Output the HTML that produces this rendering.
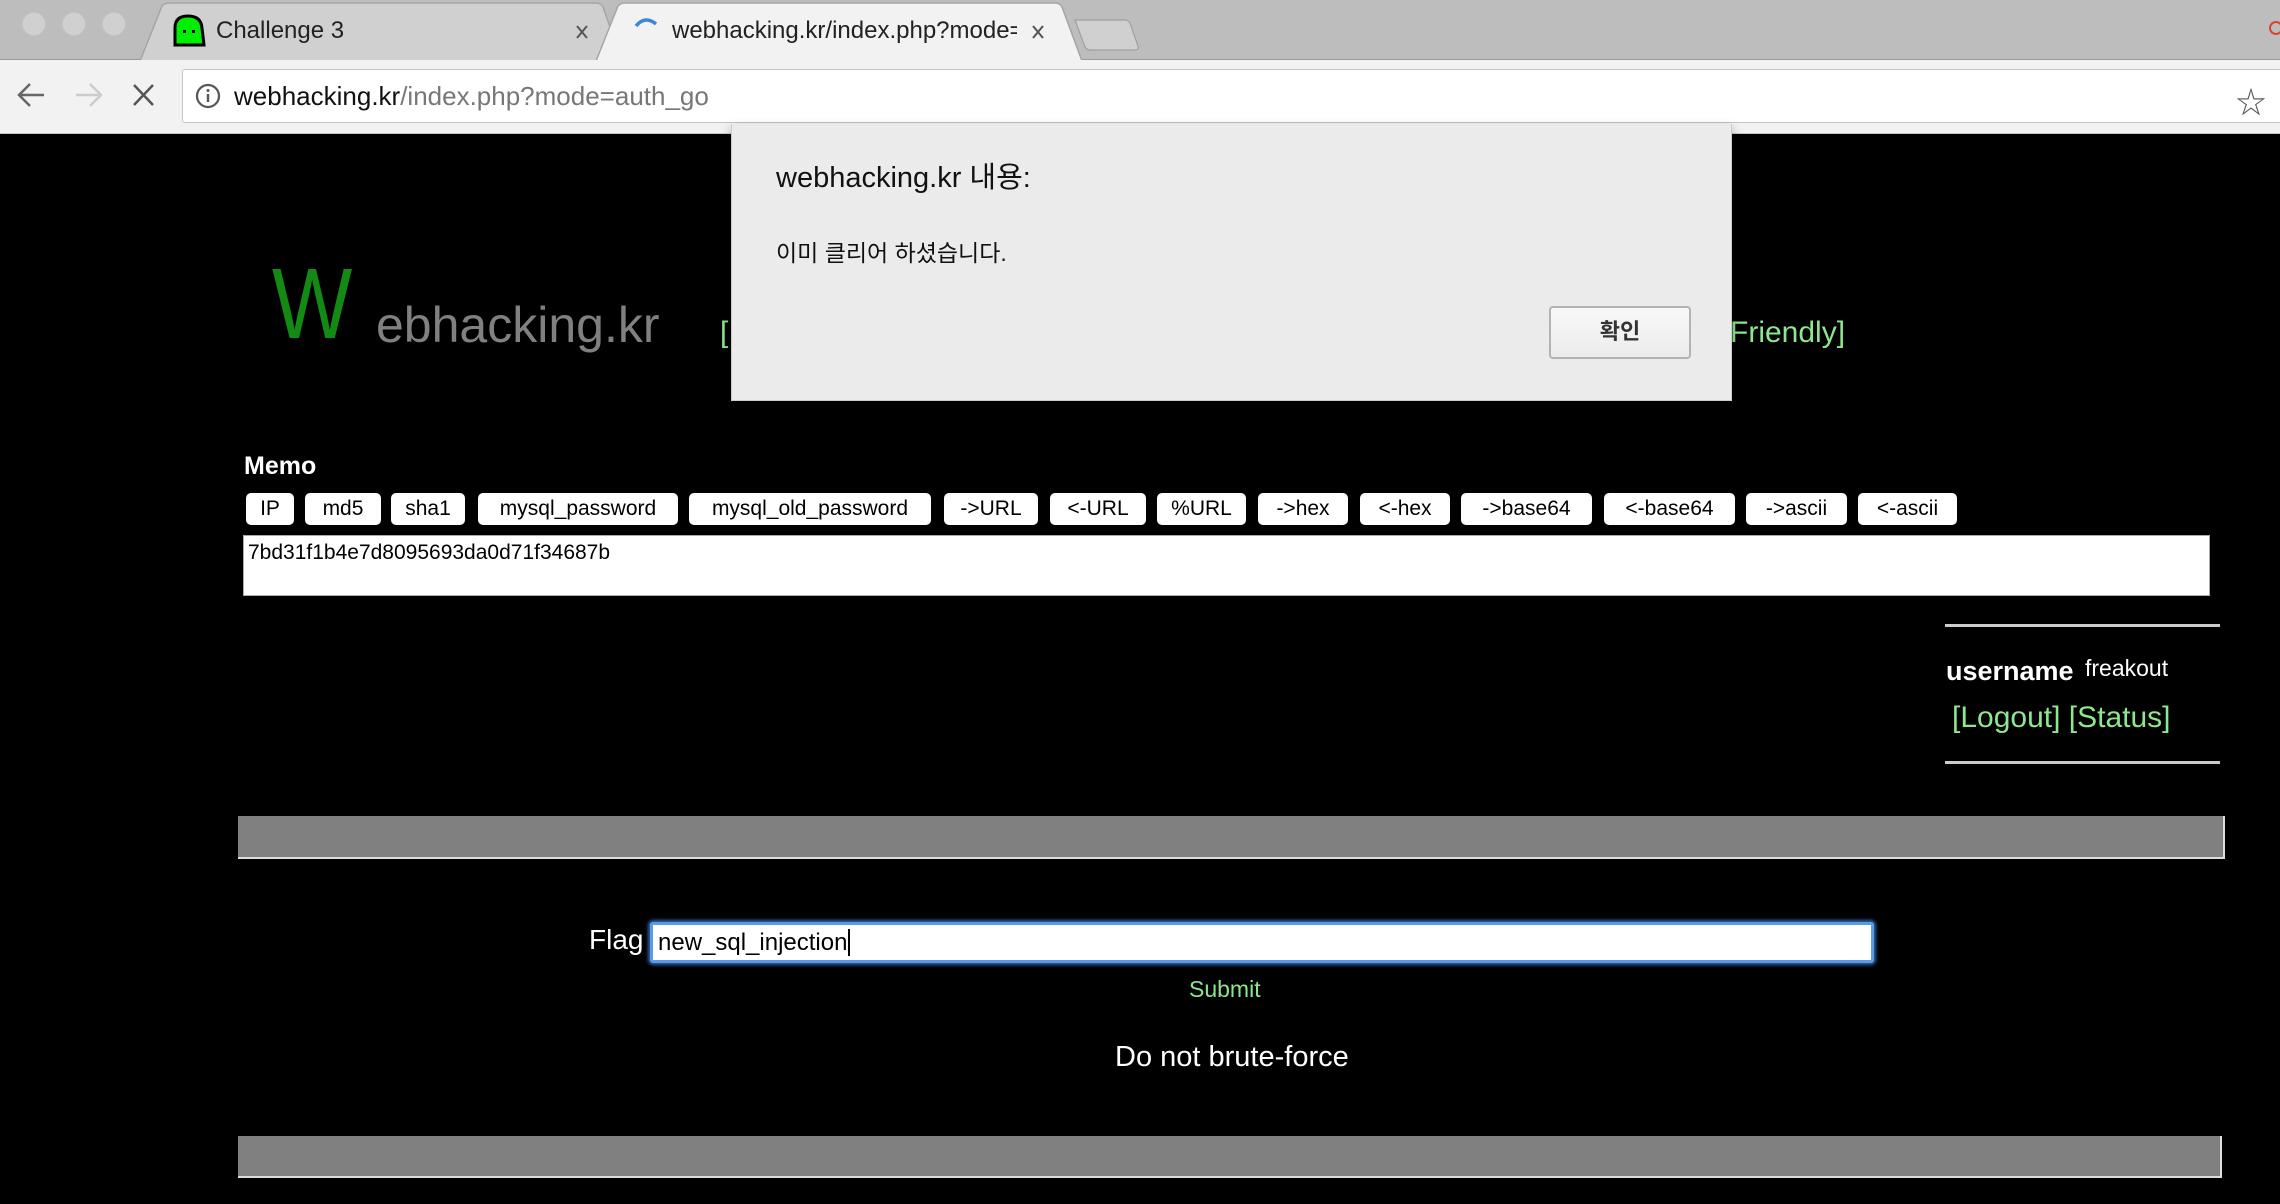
<!DOCTYPE html>
<html><head><meta charset="utf-8"><style>
*{margin:0;padding:0;box-sizing:border-box}
body{width:2280px;height:1204px;background:#000;position:relative;overflow:hidden;font-family:"Liberation Sans","Noto Sans CJK KR",sans-serif}
.a{position:absolute;white-space:nowrap}
.tabbar{left:0;top:0;width:2280px;height:60px;background:#bdbdbd;border-bottom:1px solid #9a9a9a}
.dot{width:24px;height:24px;border-radius:50%;background:#d0d0d0;border:1px solid #c4c4c4;top:12px}
.toolbar{left:0;top:60px;width:2280px;height:74px;background:#f2f2f2;border-bottom:1px solid #c8c8c8}
.omni{left:182px;top:69px;width:2100px;height:54px;background:#fff;border:1px solid #c6c6c6;border-radius:3px}
.btn{top:493px;height:32px;background:#fff;border-radius:5px;color:#000;font-size:21px;line-height:32px;text-align:center}
.g{color:#8ee68e;font-family:"Liberation Sans",sans-serif}
</style></head><body>
<div class="a tabbar"></div>
<div class="a dot" style="left:22px"></div>
<div class="a dot" style="left:62px"></div>
<div class="a dot" style="left:102px"></div>
<svg class="a" style="left:0;top:0" width="2280" height="62">
<path d="M140 61 L162 6 Q164 3 170 3 L596 3 Q601 3 603 7 L622 61 Z" fill="#d0d0d0" stroke="#a5a5a5" stroke-width="1.5"/>
<path d="M596 61 L618 6 Q620 3 626 3 L1055 3 Q1060 3 1062 7 L1082 61 Z" fill="#f2f2f2" stroke="#a5a5a5" stroke-width="1.5"/>
<path d="M1075 20 L1125 20 Q1128 20 1130 23 L1138 46 Q1139 50 1135 50 L1090 50 Q1087 50 1085 47 Z" fill="#d0d0d0" stroke="#a0a0a0" stroke-width="1.2"/>
<path d="M175 45 L175 28 Q175 16 188 16 Q201 16 202 28 L204 45 Z" fill="#00ee00" stroke="#000" stroke-width="3"/>
<rect x="183" y="30" width="3" height="3" fill="#000"/><rect x="192" y="30" width="3" height="3" fill="#000"/>
<path d="M636 26 Q645 15 656 24" fill="none" stroke="#3b87d9" stroke-width="3.5"/>
<path d="M577 26 L587 38 M587 26 L577 38" stroke="#555" stroke-width="2"/>
<path d="M1033 26 L1043 38 M1043 26 L1033 38" stroke="#555" stroke-width="2"/>
<circle cx="2276" cy="28" r="6" fill="none" stroke="#d9432f" stroke-width="2"/>
</svg>
<div class="a" style="left:216px;top:17px;font-size:24px;color:#222">Challenge 3</div>
<div class="a" style="left:672px;top:17px;font-size:24px;color:#222;width:345px;overflow:hidden">webhacking.kr/index.php?mode=auth_go</div>
<div class="a toolbar"></div>
<svg class="a" style="left:0;top:60px" width="180" height="74">
<path d="M44 35 L20 35 M30 24 L19 35 L30 46" fill="none" stroke="#666" stroke-width="2.5"/>
<path d="M76 35 L100 35 M90 24 L101 35 L90 46" fill="none" stroke="#ccc" stroke-width="2.5"/>
<path d="M134 25 L153 45 M153 25 L134 45" stroke="#555" stroke-width="2.5"/>
</svg>
<div class="a omni"></div>
<svg class="a" style="left:194px;top:82px" width="28" height="28"><circle cx="14" cy="14" r="11" fill="none" stroke="#555" stroke-width="2.2"/><rect x="12.8" y="12" width="2.4" height="8" fill="#555"/><circle cx="14" cy="8.5" r="1.5" fill="#555"/></svg>
<div class="a" style="left:234px;top:81px;font-size:26px;color:#111">webhacking.kr<span style="color:#777">/index.php?mode=auth_go</span></div>
<div class="a" style="left:2236px;top:78px;font-size:30px;color:#555">☆</div>

<div class="a" style="left:272px;top:254px;font-size:100px;color:#138a13;line-height:1;transform:scaleX(0.85);transform-origin:left">W</div>
<div class="a" style="left:376px;top:300px;font-size:50px;color:#808080;line-height:1">ebhacking.kr</div>
<div class="a g" style="left:720px;top:316px;font-size:30px">[</div>
<div class="a g" style="left:1730px;top:316px;font-size:30px">Friendly]</div>

<div class="a" style="left:244px;top:452px;font-size:25px;color:#fff;font-weight:bold">Memo</div>
<div class="a btn" style="left:246px;width:48px">IP</div>
<div class="a btn" style="left:305px;width:76px">md5</div>
<div class="a btn" style="left:391px;width:74px">sha1</div>
<div class="a btn" style="left:478px;width:200px">mysql_password</div>
<div class="a btn" style="left:689px;width:242px">mysql_old_password</div>
<div class="a btn" style="left:944px;width:94px">-&gt;URL</div>
<div class="a btn" style="left:1050px;width:96px">&lt;-URL</div>
<div class="a btn" style="left:1157px;width:89px">%URL</div>
<div class="a btn" style="left:1258px;width:90px">-&gt;hex</div>
<div class="a btn" style="left:1360px;width:90px">&lt;-hex</div>
<div class="a btn" style="left:1461px;width:131px">-&gt;base64</div>
<div class="a btn" style="left:1604px;width:131px">&lt;-base64</div>
<div class="a btn" style="left:1746px;width:101px">-&gt;ascii</div>
<div class="a btn" style="left:1858px;width:99px">&lt;-ascii</div>
<div class="a" style="left:243px;top:535px;width:1967px;height:61px;background:#fff;border:1px solid #aaa;font-size:21px;color:#000;padding:5px 4px">7bd31f1b4e7d8095693da0d71f34687b</div>

<div class="a" style="left:1945px;top:624px;width:275px;height:3px;background:#ccc"></div>
<div class="a" style="left:1946px;top:656px;font-size:27px;color:#fff;font-weight:bold">username</div>
<div class="a" style="left:2085px;top:655px;font-size:23px;color:#fff">freakout</div>
<div class="a g" style="left:1952px;top:701px;font-size:30px">[Logout] [Status]</div>
<div class="a" style="left:1945px;top:761px;width:275px;height:3px;background:#ccc"></div>

<div class="a" style="left:238px;top:816px;width:1987px;height:43px;background:#808080;border-right:2px solid #ddd;border-bottom:2px solid #ddd"></div>

<div class="a" style="left:589px;top:924px;font-size:28px;color:#fff">Flag</div>
<div class="a" style="left:650px;top:922px;width:1224px;height:41px;background:#fff;border:3px solid #5b9be6;box-shadow:0 0 3px 2px #2e63a8;border-radius:3px;font-size:24px;padding:4px 5px;color:#000">new_sql_injection<span style="border-left:2px solid #000;margin-left:1px"></span></div>
<div class="a" style="left:1189px;top:976px;font-size:23px;color:#8ee68e">Submit</div>
<div class="a" style="left:1115px;top:1041px;font-size:29px;color:#fff">Do not brute-force</div>

<div class="a" style="left:238px;top:1136px;width:1984px;height:42px;background:#808080;border-right:2px solid #ddd;border-bottom:2px solid #ddd"></div>

<div class="a" style="left:731px;top:124px;width:1001px;height:277px;background:#ebebeb;border:1px solid #ccc;border-top:none;box-shadow:0 4px 10px rgba(0,0,0,.3)"></div>
<div class="a" style="left:776px;top:154px;font-size:29px;color:#111">webhacking.kr 내용:</div>
<div class="a" style="left:776px;top:234px;font-size:23px;color:#111">이미 클리어 하셨습니다.</div>
<div class="a" style="left:1549px;top:306px;width:142px;height:53px;background:linear-gradient(#f8f8f8,#ececec);border:2px solid #b3b3b3;border-radius:4px;font-size:22px;font-weight:bold;color:#333;text-align:center;line-height:48px">확인</div>
</body></html>
